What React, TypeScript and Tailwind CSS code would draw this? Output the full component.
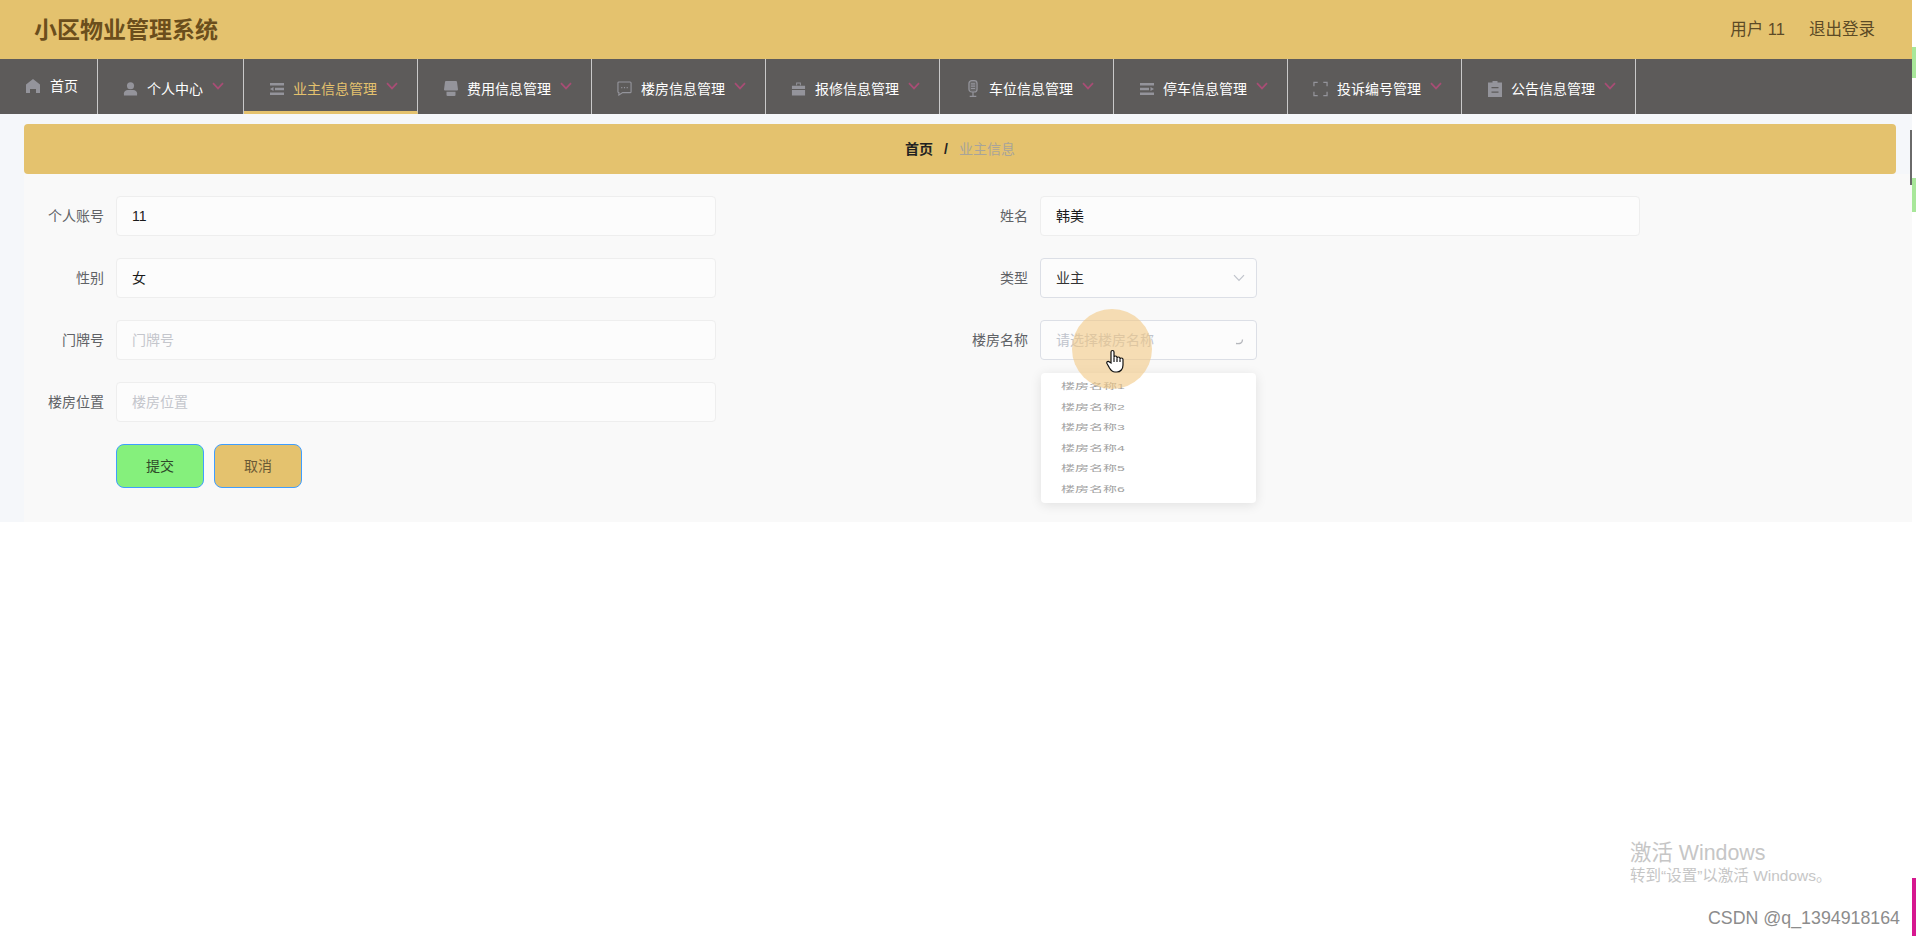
const font = "font-['Liberation_Sans','Noto_Sans_CJK_SC',sans-serif]";
const iconGray = "#94949b";

function HomeIcon() {
  return (
    <svg viewBox="0 0 16 16" className="w-4 h-4" fill={iconGray}>
      <path d="M8 1 15 6.5V15h-4v-4H5v4H1V6.5z" />
    </svg>
  );
}

function UserIcon() {
  return (
    <svg viewBox="0 0 16 16" className="w-4 h-4" fill={iconGray}>
      <circle cx="8" cy="4.5" r="3.8" />
      <path d="M1 15v-2.5C1 10.5 3 9 5 9h6c2 0 4 1.5 4 3.5V15z" />
    </svg>
  );
}

function FoldIcon() {
  return (
    <svg viewBox="0 0 14 12" className="w-[14px] h-3" fill={iconGray}>
      <path d="M0 0h14v2.6H0zM5 4.7h9v2.6H5zM0 9.4h14V12H0zM3.5 4v4L0 6z" />
    </svg>
  );
}

function ShopIcon() {
  return (
    <svg viewBox="0 0 14 15" className="w-[14px] h-[15px]" fill={iconGray}>
      <path d="M2 0h10a1 1 0 0 1 1 .9L14 8.5a1 1 0 0 1-1 1H1a1 1 0 0 1-1-1L1 .9A1 1 0 0 1 2 0zM2.5 10.8h9V14a1 1 0 0 1-1 1h-7a1 1 0 0 1-1-1z" />
    </svg>
  );
}

function ChatIcon() {
  return (
    <svg viewBox="0 0 16 16" className="w-[15px] h-[15px]" fill="none" stroke={iconGray} strokeWidth="1.2">
      <path d="M2 1h12a1 1 0 0 1 1 1v9.4a1 1 0 0 1-1 1H6L2 15v-2.6a1 1 0 0 1-1-1V2a1 1 0 0 1 1-1z" />
      <path d="M4.5 7h1.2M7.4 7h1.2M10.3 7h1.2" />
    </svg>
  );
}

function CaseIcon() {
  return (
    <svg viewBox="0 0 16 16" className="w-4 h-4" fill={iconGray}>
      <path d="M5.5 4V1h5v3H9.5V2.2h-3V4zM1 4.5h14V8H1zM1 9h14v6H1z" />
    </svg>
  );
}

function MicIcon() {
  return (
    <svg viewBox="0 0 12 18" className="w-3 h-[17px]" fill="none" stroke={iconGray} strokeWidth="1.3">
      <rect x="1.7" y="0.7" width="8.6" height="12" rx="3" fill={iconGray} fillOpacity="0.25" />
      <path d="M3.8 4h4.4M3.8 6.5h4.4M3.8 9h4.4M6 12.7v4.6M2.5 17.3h7" />
    </svg>
  );
}

function UnfoldIcon() {
  return (
    <svg viewBox="0 0 14 12" className="w-[14px] h-3" fill={iconGray}>
      <path d="M0 0h14v2.6H0zM0 4.7h9v2.6H0zM0 9.4h14V12H0zM10.5 4v4L14 6z" />
    </svg>
  );
}

function FullIcon() {
  return (
    <svg viewBox="0 0 16 16" className="w-4 h-4" fill="none" stroke={iconGray} strokeWidth="1.3">
      <path d="M1 5V1h4M11 1h4v4M15 11v4h-4M5 15H1v-4" />
    </svg>
  );
}

function ClipIcon() {
  return (
    <svg viewBox="0 0 14 16" className="w-[14px] h-4" fill={iconGray}>
      <path
        d="M4.5 0h5v1.5H14V16H0V1.5h4.5zM3.5 6v1.2h7V6zM3.5 10.5v1.2h7v-1.2z"
        fillRule="evenodd"
      />
    </svg>
  );
}

function HandCursor() {
  return (
    <svg viewBox="0 0 18 24" className="absolute left-[1082px] top-[175px] w-[18px] h-6" fill="white" stroke="#111111" strokeWidth="1.2">
      <path d="M5 14V3a1.5 1.5 0 0 1 3 0v5.5a1.5 1.5 0 0 1 3 0v1a1.5 1.5 0 0 1 3 0v1a1.5 1.5 0 0 1 3 0V16c0 4-2.5 7-6 7H9c-2.5 0-4-1.5-5.5-4L1 14.5c-.8-1.6 1.2-3 2.5-1.5z" />
      <path d="M8 8.5V13M11 9.5V13M14 10.5V13" fill="none" />
    </svg>
  );
}

function Chevron({ color = "#a84d75", stroke = 1.7 }: { color?: string; stroke?: number }) {
  return (
    <svg viewBox="0 0 12 8" className="w-3 h-2" fill="none" stroke={color} strokeWidth={stroke}>
      <path d="M1 1.2 6 6.4l5-5.2" />
    </svg>
  );
}

const menus = [
  { label: "个人中心", icon: <UserIcon />, width: "w-[146px]" },
  { label: "业主信息管理", icon: <FoldIcon />, width: "w-[174px]", active: true },
  { label: "费用信息管理", icon: <ShopIcon />, width: "w-[174px]" },
  { label: "楼房信息管理", icon: <ChatIcon />, width: "w-[174px]" },
  { label: "报修信息管理", icon: <CaseIcon />, width: "w-[174px]" },
  { label: "车位信息管理", icon: <MicIcon />, width: "w-[174px]" },
  { label: "停车信息管理", icon: <UnfoldIcon />, width: "w-[174px]" },
  { label: "投诉编号管理", icon: <FullIcon />, width: "w-[174px]" },
  { label: "公告信息管理", icon: <ClipIcon />, width: "w-[174px]" },
];

function Nav() {
  return (
    <nav className="flex h-[55px] bg-[#5d5b5a]">
      <div className="flex items-center gap-[9px] w-[98px] pl-[25px] pb-[2px] border-r border-[#c9c9c9] text-sm text-white">
        <HomeIcon />
        <span>首页</span>
      </div>
      {menus.map((m) => (
        <div
          key={m.label}
          className={`flex items-center pl-[25px] border-r border-[#c9c9c9] text-sm ${m.width} ${
            m.active ? "pt-[7px] text-[#e4c26e] border-b-[3px] border-b-[#e4c26e]" : "pt-1 text-white"
          }`}
        >
          <span className="flex items-center justify-center w-[15px] mr-[9px]">{m.icon}</span>
          <span>{m.label}</span>
          <span className="flex ml-[9px] -mt-[5px]">
            <Chevron />
          </span>
        </div>
      ))}
    </nav>
  );
}

function Field({ label, value, placeholder }: { label: string; value?: string; placeholder?: string }) {
  return (
    <div className="flex items-center h-10">
      <label className="w-[92px] pr-3 text-right text-sm text-[#606266]">{label}</label>
      <div className="flex items-center w-[600px] h-10 px-[15px] rounded border border-[#eeeeee] bg-[#fcfcfc] text-sm">
        {value ? <span className="text-[#1a1a1a]">{value}</span> : <span className="text-[#c4c6cc]">{placeholder}</span>}
      </div>
    </div>
  );
}

function SelectRow({ label, children }: { label: string; children: React.ReactNode }) {
  return (
    <div className="flex items-center h-10 ml-[924px]">
      <label className="w-[92px] pr-3 text-right text-sm text-[#606266]">{label}</label>
      {children}
    </div>
  );
}

function Dropdown() {
  const items = ["楼房名称1", "楼房名称2", "楼房名称3", "楼房名称4", "楼房名称5", "楼房名称6"];
  return (
    <div className="absolute left-[1017px] top-[199px] w-[215px] h-[130px] pt-[3px] px-[20px] bg-white rounded-sm shadow-[0_2px_12px_rgba(0,0,0,0.1)]">
      {items.map((t) => (
        <div key={t} className="h-[20.5px] flex items-center text-[14px] text-[#a0a0a0] scale-y-[0.55]">
          {t}
        </div>
      ))}
    </div>
  );
}

export default function App() {
  return (
    <div className={`relative flex min-h-[936px] bg-white ${font}`}>
      <div className="w-[1912px] shrink-0">
        <header className="flex items-center justify-between h-[59px] pl-[34px] pr-[37px] bg-[#e4c26e]">
          <h1 className="mt-[2px] text-[23px] font-bold text-[#6b4e1c]">小区物业管理系统</h1>
          <div className="flex gap-6 text-[16.5px] text-[#5c4a26]">
            <span>用户 11</span>
            <span>退出登录</span>
          </div>
        </header>
        <Nav />
        <main className="pt-[10px] bg-[#f5f7fa] h-[408px]">
          <div className="flex items-center justify-center gap-[11px] ml-6 mr-4 h-[50px] rounded-[4px] bg-[#e4c26e] text-sm">
            <span className="font-bold text-[#222222]">首页</span>
            <span className="font-bold text-[#222222]">/</span>
            <span className="text-[#a8a49a]">业主信息</span>
          </div>
          <div className="relative ml-6 h-[348px] pt-[22px] bg-[#f9f9f9]">
            <div className="flex flex-col gap-[22px]">
              <div className="flex">
                <Field label="个人账号" value="11" />
                <div className="ml-[232px]">
                  <Field label="姓名" value="韩美" />
                </div>
              </div>
              <div className="relative">
                <Field label="性别" value="女" />
                <div className="absolute top-0 left-0 w-full">
                  <SelectRow label="类型">
                    <div className="flex items-center justify-between w-[217px] h-10 pl-[15px] pr-[11px] rounded border border-[#dcdfe6] bg-[#fcfcfc] text-sm text-[#333333]">
                      <span>业主</span>
                      <Chevron color="#c0c4cc" stroke={1.2} />
                    </div>
                  </SelectRow>
                </div>
              </div>
              <div className="relative">
                <Field label="门牌号" placeholder="门牌号" />
                <div className="absolute top-0 left-0 w-full">
                  <SelectRow label="楼房名称">
                    <div className="flex items-center justify-between w-[217px] h-10 pl-[15px] pr-[11px] rounded border border-[#dcdfe6] bg-[#fcfcfc] text-sm text-[#c0c4cc]">
                      <span>请选择楼房名称</span>
                      <svg viewBox="0 0 12 12" className="w-3 h-3" fill="none" stroke="#b5b7bc" strokeWidth="1.3">
                        <path d="M3 9.5C7 10 9.5 9.2 9.5 5.5" />
                      </svg>
                    </div>
                  </SelectRow>
                </div>
              </div>
              <Field label="楼房位置" placeholder="楼房位置" />
            </div>
            <div className="flex gap-[10px] mt-[22px] ml-[92px]">
              <button className="w-[88px] h-[44px] rounded-[8px] border border-[#409eff] bg-[#85f07c] text-sm text-[#2f4a2a]">
                提交
              </button>
              <button className="w-[88px] h-[44px] rounded-[8px] border border-[#409eff] bg-[#e4c26e] text-sm text-[#6b5a35]">
                取消
              </button>
            </div>
            <Dropdown />
            {/* cursor highlight from the screen recorder */}
            <div className="absolute left-[1048px] top-[135px] w-20 h-20 rounded-full bg-[#f2c883]/60" />
            <HandCursor />
          </div>
        </main>
        <div className="flex flex-col items-end pt-[319px] pr-3">
          <div className="w-[270px] text-[#c6c6c6]">
            <div className="text-[21.4px] leading-6">激活 Windows</div>
            <div className="mt-[1px] text-[15.5px] leading-5">转到“设置”以激活 Windows。</div>
          </div>
          <div className="mt-[20px] text-[17.8px] leading-6 text-[#8c8c8c]">CSDN @q_1394918164</div>
        </div>
      </div>
      {/* edge of the window behind */}
      <div className="flex-1 flex flex-col">
        <div className="h-[47px]" />
        <div className="h-[31px] bg-[#a8e79a]" />
        <div className="h-[100px]" />
        <div className="h-[34px] bg-[#a8e79a]" />
        <div className="flex-1" />
        <div className="h-[58px] bg-[#d6188f]" />
      </div>
      <div className="absolute left-[1910px] top-[130px] w-[2px] h-[55px] bg-[#6a6a6a]" />
    </div>
  );
}
